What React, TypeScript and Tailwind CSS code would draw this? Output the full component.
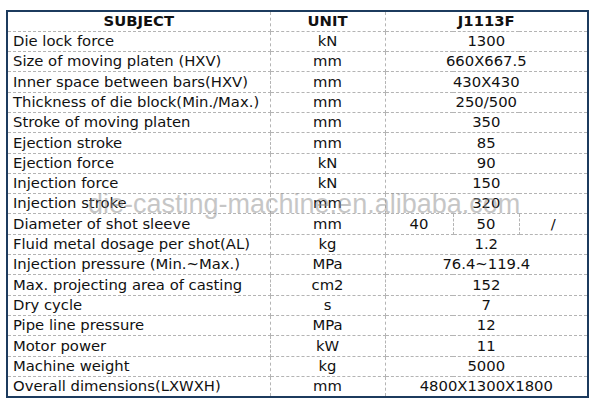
const rows: [string, string, string | string[]][] = [
  ["Die lock force", "kN", "1300"],
  ["Size of moving platen (HXV)", "mm", "660X667.5"],
  ["Inner space between bars(HXV)", "mm", "430X430"],
  ["Thickness of die block(Min./Max.)", "mm", "250/500"],
  ["Stroke of moving platen", "mm", "350"],
  ["Ejection stroke", "mm", "85"],
  ["Ejection force", "kN", "90"],
  ["Injection force", "kN", "150"],
  ["Injection stroke", "mm", "320"],
  ["Diameter of shot sleeve", "mm", ["40", "50", "/"]],
  ["Fluid metal dosage per shot(AL)", "kg", "1.2"],
  ["Injection pressure (Min.~Max.)", "MPa", "76.4~119.4"],
  ["Max. projecting area of casting", "cm2", "152"],
  ["Dry cycle", "s", "7"],
  ["Pipe line pressure", "MPa", "12"],
  ["Motor power", "kW", "11"],
  ["Machine weight", "kg", "5000"],
  ["Overall dimensions(LXWXH)", "mm", "4800X1300X1800"],
];

const cell = "border border-dashed border-[#b4b4b4] h-[20.3px] p-0 leading-none";

export default function App() {
  return (
    <div
      className="relative w-[598px] h-[409px] bg-white pt-[10px] pl-[6px] text-[#111] text-[14.8px]"
      style={{ fontFamily: '"DejaVu Sans", Verdana, sans-serif' }}
    >
      <table className="border-collapse border-2 border-[#1c3b5e] w-[583px] table-fixed">
        <colgroup>
          <col className="w-[263px]" />
          <col className="w-[115px]" />
          <col className="w-[68px]" />
          <col className="w-[66px]" />
          <col className="w-[69px]" />
        </colgroup>
        <tbody>
          <tr>
            <td className={`${cell} border-t-0 border-l-0 text-center font-bold`}>SUBJECT</td>
            <td className={`${cell} border-t-0 text-center font-bold`}>UNIT</td>
            <td colSpan={3} className={`${cell} border-t-0 border-r-0 text-center font-bold`}>
              J1113F
            </td>
          </tr>
          {rows.map(([subject, unit, value], i) => {
            const last = i === rows.length - 1;
            const b = last ? " border-b-0" : "";
            return (
              <tr key={subject}>
                <td className={`${cell} border-l-0 pl-[5px] whitespace-nowrap${b}`}>{subject}</td>
                <td className={`${cell} text-center${b}`}>{unit}</td>
                {Array.isArray(value) ? (
                  value.map((v, j) => (
                    <td key={j} className={`${cell} text-center${j === 2 ? " border-r-0" : ""}${b}`}>
                      {v}
                    </td>
                  ))
                ) : (
                  <td colSpan={3} className={`${cell} border-r-0 text-center${b}`}>
                    {value}
                  </td>
                )}
              </tr>
            );
          })}
        </tbody>
      </table>
      <div
        className="absolute left-[88px] top-[191px] text-[27px] leading-none text-[#8f8f8f] opacity-50 whitespace-nowrap pointer-events-none"
        style={{ fontFamily: '"Liberation Sans", Arial, sans-serif' }}
      >
        die-casting-machine.en.alibaba.com
      </div>
    </div>
  );
}
